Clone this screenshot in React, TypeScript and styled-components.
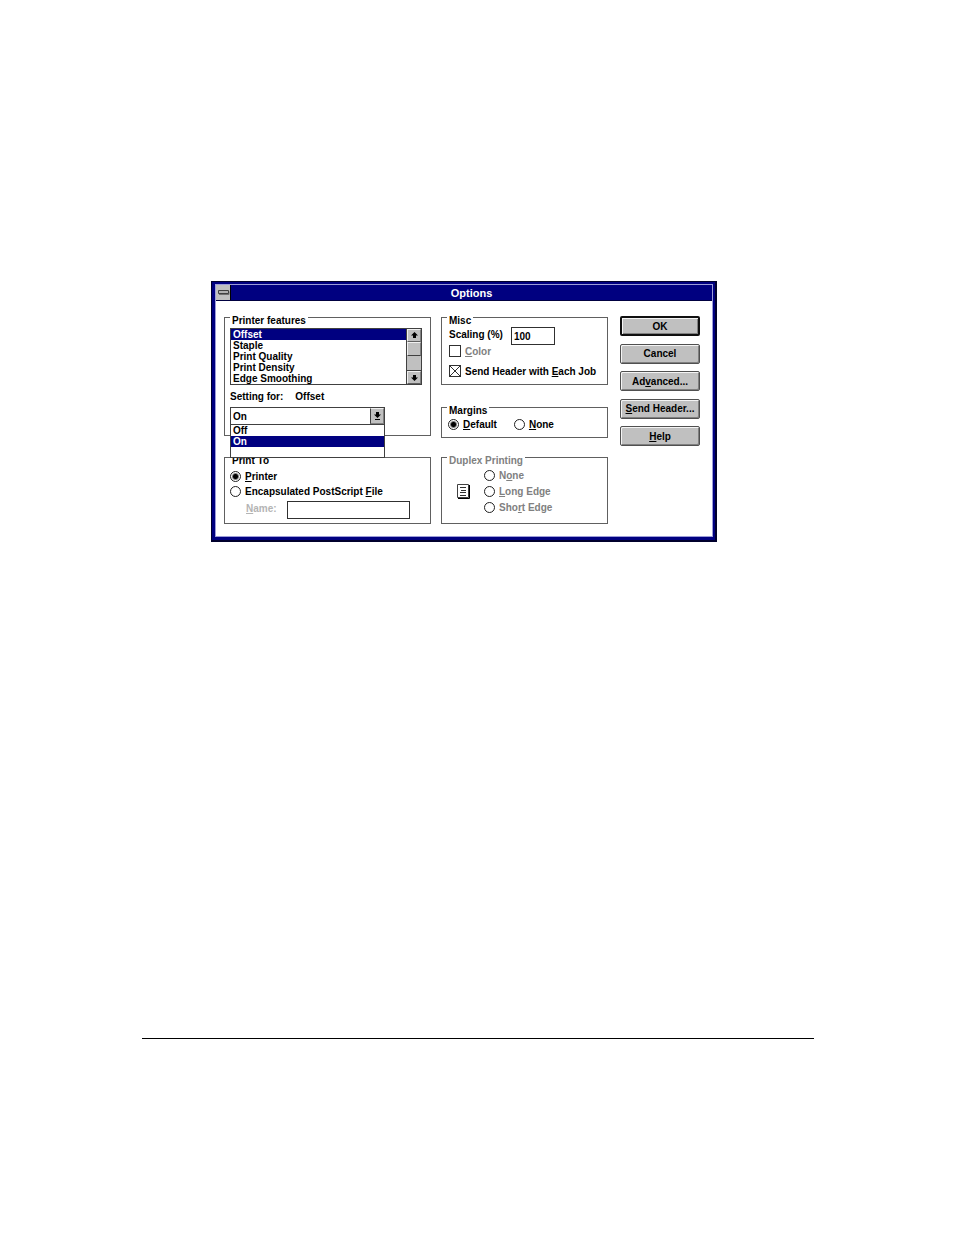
import React from "react";
import styled, { createGlobalStyle } from "styled-components";

const navy = "#000080";
const silver = "#c0c0c0";

const GlobalStyle = createGlobalStyle`
  *, *::before, *::after { box-sizing: border-box; }
  body {
    margin: 0;
    background: #fff;
    color: #000;
    font: bold 10px/11px "Liberation Sans", Arial, sans-serif;
  }
  button, input, select { font: inherit; color: inherit; margin: 0; }
  u { text-underline-offset: 1px; }
`;

const Page = styled.main`
  min-height: 100vh;
  padding: 281px 140px 100px 142px;
`;

const Dialog = styled.section`
  max-width: 506px;
  margin-left: 69px;
  background: ${navy};
  border: solid #00002c;
  border-width: 1px 2px 2px 1px;
  padding: 2px 2px 3px 3px;
`;

const Frame = styled.div`
  border: 1px solid #9c9cd8;
  background: #fff;
`;

const TitleBar = styled.header`
  display: flex;
  height: 16px;
  background: ${navy};
  border-bottom: 1px solid #000040;
`;

const SystemMenu = styled.button`
  display: flex;
  align-items: center;
  justify-content: center;
  width: 15px;
  padding: 0;
  border: 0;
  border-right: 1px solid #000;
  background: ${silver};
`;

const Title = styled.h1`
  flex: 1;
  margin: 0;
  color: #fff;
  font-size: 11px;
  line-height: 16px;
  text-align: center;
`;

const Body = styled.form`
  display: grid;
  grid-template-columns: 207fr 167fr 82px;
  column-gap: 10px;
  padding: 16px 12px 12px 8px;
`;

const Column = styled.div`
  display: flex;
  flex-direction: column;
  min-width: 0;
`;

const Group = styled.fieldset<{ $height: number; $gap?: number; $muted?: boolean }>`
  min-width: 0;
  min-height: ${(p) => p.$height}px;
  margin: ${(p) => p.$gap ?? 0}px 0 0;
  padding: 0 8px 0 5px;
  border: 1px solid #606060;
  color: ${(p) => (p.$muted ? "#808080" : "#000")};
`;

const Legend = styled.legend`
  height: 1px;
  padding: 0 2px;
  line-height: 8px;
`;

const FeatureBox = styled.div`
  display: flex;
  margin-top: 10px;
  border: 1px solid #404040;
`;

const Options = styled.ul`
  flex: 1;
  margin: 0;
  padding: 0;
  list-style: none;
`;

const Option = styled.li<{ $selected?: boolean }>`
  height: 11px;
  padding-left: 2px;
  background: ${(p) => (p.$selected ? navy : "#fff")};
  color: ${(p) => (p.$selected ? "#fff" : "#000")};
`;

const ScrollBar = styled.div`
  display: flex;
  flex-direction: column;
  width: 15px;
  border-left: 1px solid #404040;
  background: ${silver};
`;

const ScrollButton = styled.button`
  display: flex;
  align-items: center;
  justify-content: center;
  height: 13px;
  padding: 0;
  border: 1px solid;
  border-color: #f0f0f0 #808080 #606060 #f0f0f0;
  background: ${silver};
`;

const ScrollThumb = styled.div`
  height: 14px;
  border: 1px solid;
  border-color: #f0f0f0 #808080 #404040 #f0f0f0;
`;

const ScrollTrack = styled.div`
  flex: 1;
  border-bottom: 1px solid #404040;
`;

const SettingLine = styled.div`
  display: flex;
  gap: 12px;
  margin: 6px 0 5px;
`;

const Combo = styled.div`
  position: relative;
  width: 155px;
`;

const ComboSelect = styled.select`
  display: block;
  appearance: none;
  width: 100%;
  height: 18px;
  padding: 0 16px 0 2px;
  border: 1px solid #404040;
  border-radius: 0;
  background: #fff;
`;

const ComboArrow = styled.span`
  position: absolute;
  top: 1px;
  right: 1px;
  display: flex;
  align-items: center;
  justify-content: center;
  width: 14px;
  height: 16px;
  border: 1px solid;
  border-color: #f0f0f0 #808080 #808080 #404040;
  background: ${silver};
  pointer-events: none;
`;

const ComboPopup = styled(Options)`
  position: absolute;
  z-index: 1;
  top: 17px;
  left: 0;
  right: 0;
  height: 34px;
  border: 1px solid #404040;
  background: #fff;
`;

const Row = styled.div<{ $top?: number }>`
  display: flex;
  align-items: center;
  margin-top: ${(p) => p.$top ?? 0}px;
`;

const Choice = styled.label<{ $muted?: boolean }>`
  display: flex;
  align-items: center;
  gap: 4px;
  height: 12px;
  color: ${(p) => (p.$muted ? "#808080" : "inherit")};
  white-space: nowrap;
`;

const Radio = styled.input`
  appearance: none;
  flex: none;
  width: 11px;
  height: 11px;
  border: 1px solid #202020;
  border-radius: 50%;
  background: #fff;
  &:checked { background: radial-gradient(circle, #000 0 2px, #fff 4px); }
`;

const CheckInput = styled.input`
  appearance: none;
  flex: none;
  width: 12px;
  height: 12px;
  border: 1px solid #303030;
  background: #fff;
  &:checked {
    background:
      linear-gradient(45deg, transparent 46%, #303030 47% 53%, transparent 54%),
      linear-gradient(135deg, transparent 46%, #303030 47% 53%, transparent 54%);
  }
`;

const ChoiceStack = styled.div<{ $gap: number }>`
  display: flex;
  flex-direction: column;
  gap: ${(p) => p.$gap}px;
`;

const TextInput = styled.input<{ $width: number }>`
  width: ${(p) => p.$width}px;
  height: 18px;
  padding: 0 2px;
  border: 1px solid #303030;
  border-radius: 0;
  background: #fff;
`;

const FieldLabel = styled.label<{ $width: number; $faint?: boolean }>`
  width: ${(p) => p.$width}px;
  height: 15px;
  color: ${(p) => (p.$faint ? "#b4b4b4" : "inherit")};
`;

const NameRow = styled(Row)`
  padding-left: 16px;
`;

const MiscBody = styled.div`
  padding-left: 2px;
`;

const MarginChoices = styled(Row)`
  gap: 17px;
  padding-left: 1px;
`;

const DuplexBody = styled(Row)`
  gap: 14px;
  padding-left: 10px;
`;

const Actions = styled(Column)`
  justify-content: space-between;
  height: 130px;
  margin: -1px 0 0 2px;
`;

const PushButton = styled.button<{ $primary?: boolean }>`
  height: 20px;
  padding: 0;
  border: ${(p) => (p.$primary ? "2px solid #101010" : "1px solid #505050")};
  border-radius: 2px;
  background: ${silver};
  box-shadow: inset 1px 1px #f4f4f4, inset -1px -1px #808080;
  white-space: nowrap;
`;

const Footer = styled.hr`
  height: 1px;
  margin: 496px 0 0;
  border: 0;
  background: #000;
`;

function Arrow({ down, bar }: { down?: boolean; bar?: boolean }) {
  return (
    <svg width="9" height="9" viewBox="0 0 9 9" aria-hidden="true">
      <path
        d="M4.5 1 L8 4.5 H6 V7 H3 V4.5 H1 Z"
        transform={down ? (bar ? "rotate(180 4.5 3.5)" : "rotate(180 4.5 4.5)") : undefined}
      />
      {bar && <path d="M2 7h5v1H2z" />}
    </svg>
  );
}

const features = ["Offset", "Staple", "Print Quality", "Print Density", "Edge Smoothing"];

export default function App() {
  return (
    <Page>
      <GlobalStyle />
      <Dialog role="dialog" aria-labelledby="title">
        <Frame>
          <TitleBar>
            <SystemMenu type="button" aria-label="System menu">
              <svg width="13" height="5" viewBox="0 0 13 5" aria-hidden="true">
                <path d="M2 4.5h10v-3" fill="none" stroke="#707070" />
                <path d="M1.5 0.5h10v3h-10z" fill="#b0b0b0" stroke="#404040" />
              </svg>
            </SystemMenu>
            <Title id="title">Options</Title>
          </TitleBar>
          <Body onSubmit={(e) => e.preventDefault()}>
            <Column>
              <Group $height={119}>
                <Legend>Printer features</Legend>
                <FeatureBox>
                  <Options role="listbox" aria-label="Printer features">
                    {features.map((name, i) => (
                      <Option key={name} role="option" aria-selected={i === 0} $selected={i === 0}>
                        {name}
                      </Option>
                    ))}
                  </Options>
                  <ScrollBar>
                    <ScrollButton type="button" aria-label="Scroll up"><Arrow /></ScrollButton>
                    <ScrollThumb />
                    <ScrollTrack />
                    <ScrollButton type="button" aria-label="Scroll down"><Arrow down /></ScrollButton>
                  </ScrollBar>
                </FeatureBox>
                <SettingLine>
                  <label htmlFor="setting">Setting for:</label>
                  <span>Offset</span>
                </SettingLine>
                <Combo>
                  <ComboSelect id="setting" defaultValue="On">
                    <option>Off</option>
                    <option>On</option>
                  </ComboSelect>
                  <ComboArrow><Arrow down bar /></ComboArrow>
                  <ComboPopup role="listbox" aria-label="Offset setting">
                    <Option role="option" aria-selected={false}>Off</Option>
                    <Option role="option" aria-selected $selected>On</Option>
                  </ComboPopup>
                </Combo>
              </Group>
              <Group $height={67} $gap={21}>
                <Legend>Print To</Legend>
                <Row $top={12}>
                  <ChoiceStack $gap={3}>
                    <Choice><Radio type="radio" name="target" defaultChecked /><span><u>P</u>rinter</span></Choice>
                    <Choice><Radio type="radio" name="target" /><span>Encapsulated PostScript <u>F</u>ile</span></Choice>
                  </ChoiceStack>
                </Row>
                <NameRow $top={4}>
                  <FieldLabel htmlFor="file" $width={41} $faint><u>N</u>ame:</FieldLabel>
                  <TextInput id="file" type="text" disabled $width={123} />
                </NameRow>
              </Group>
            </Column>
            <Column>
              <Group $height={68}>
                <Legend>Misc</Legend>
                <MiscBody>
                  <Row $top={9}>
                    <FieldLabel htmlFor="scaling" $width={62}>Scalin<u>g</u> (%)</FieldLabel>
                    <TextInput id="scaling" type="text" defaultValue="100" $width={44} />
                  </Row>
                  <Choice $muted><CheckInput type="checkbox" disabled /><span><u>C</u>olor</span></Choice>
                  <Row $top={8}>
                    <Choice><CheckInput type="checkbox" defaultChecked /><span>Send Header with <u>E</u>ach Job</span></Choice>
                  </Row>
                </MiscBody>
              </Group>
              <Group $height={31} $gap={22}>
                <Legend>Margins</Legend>
                <MarginChoices $top={10}>
                  <Choice><Radio type="radio" name="margins" defaultChecked /><span><u>D</u>efault</span></Choice>
                  <Choice><Radio type="radio" name="margins" /><span><u>N</u>one</span></Choice>
                </MarginChoices>
              </Group>
              <Group $height={67} $gap={19} $muted>
                <Legend>Duplex Printing</Legend>
                <DuplexBody $top={11}>
                  <svg width="13" height="15" viewBox="0 0 13 15" aria-hidden="true">
                    <path d="M0.5 0.5h11v13h-11z" fill="#fff" stroke="#404040" />
                    <path d="M12.5 1v13.5H1" fill="none" stroke="#000" />
                    <path d="M3 3.5h6M4 6.5h5M3 8.5h6M3 11.5h6" stroke="#303030" />
                  </svg>
                  <ChoiceStack $gap={4}>
                    <Choice><Radio type="radio" name="duplex" disabled /><span>N<u>o</u>ne</span></Choice>
                    <Choice><Radio type="radio" name="duplex" disabled /><span><u>L</u>ong Edge</span></Choice>
                    <Choice><Radio type="radio" name="duplex" disabled /><span>Sho<u>r</u>t Edge</span></Choice>
                  </ChoiceStack>
                </DuplexBody>
              </Group>
            </Column>
            <Actions>
              <PushButton type="submit" $primary>OK</PushButton>
              <PushButton type="button">Cancel</PushButton>
              <PushButton type="button">Ad<u>v</u>anced...</PushButton>
              <PushButton type="button"><u>S</u>end Header...</PushButton>
              <PushButton type="button"><u>H</u>elp</PushButton>
            </Actions>
          </Body>
        </Frame>
      </Dialog>
      <Footer />
    </Page>
  );
}
